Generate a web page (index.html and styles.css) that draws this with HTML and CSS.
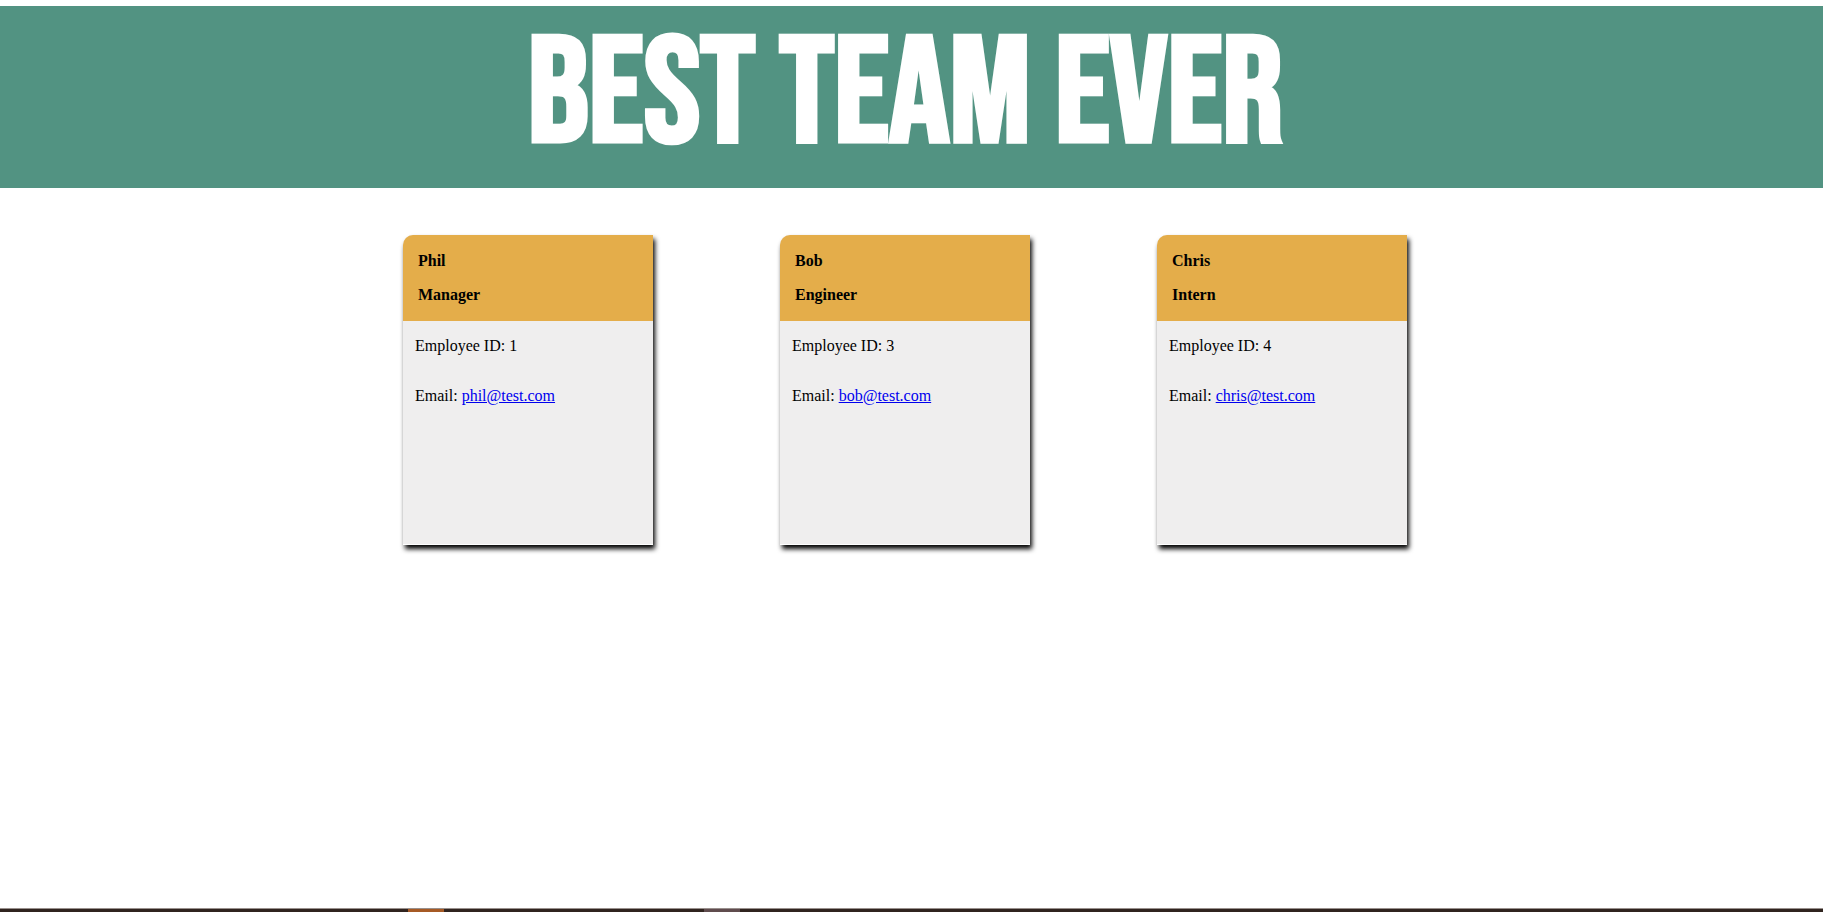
FILE: index.html
```html
<!DOCTYPE html>
<html lang="en">
<head>
<meta charset="utf-8">
<title>Best Team Ever</title>
<link rel="stylesheet" href="styles.css">
</head>
<body>
<header class="banner"><h1 class="title">BEST TEAM EVER</h1></header>
<main class="team">
  <article class="card">
    <div class="card-head"><h2 class="card-line">Phil</h2><h3 class="card-line">Manager</h3></div>
    <div class="card-body"><p class="detail">Employee ID: 1</p><p class="detail">Email: <a href="mailto:phil@test.com">phil@test.com</a></p></div>
  </article>
  <article class="card">
    <div class="card-head"><h2 class="card-line">Bob</h2><h3 class="card-line">Engineer</h3></div>
    <div class="card-body"><p class="detail">Employee ID: 3</p><p class="detail">Email: <a href="mailto:bob@test.com">bob@test.com</a></p></div>
  </article>
  <article class="card">
    <div class="card-head"><h2 class="card-line">Chris</h2><h3 class="card-line">Intern</h3></div>
    <div class="card-body"><p class="detail">Employee ID: 4</p><p class="detail">Email: <a href="mailto:chris@test.com">chris@test.com</a></p></div>
  </article>
</main>
<footer class="strip"><span class="strip-orange"></span><span class="strip-mauve"></span></footer>
</body>
</html>
```
FILE: styles.css
```css
* {
  box-sizing: border-box;
}

body {
  margin: 0;
  min-height: 100vh;
  padding-top: 6px;
  display: flex;
  flex-direction: column;
  background: #fff;
  color: #000;
  font-family: "Liberation Serif", "Times New Roman", serif;
  font-size: 16px;
  line-height: 20px;
}

.banner {
  padding: 15px 12px 15px 0;
  background: #529382;
  text-align: center;
}

.title {
  margin: 0;
  color: #fff;
  font-family: "Bebas Neue", "Roboto Condensed", "Liberation Sans Narrow", "Liberation Sans", sans-serif;
  font-size: 151px;
  font-weight: 700;
  line-height: 152px;
  white-space: nowrap;
}

.team {
  flex: 1;
  display: flex;
  justify-content: center;
  align-items: flex-start;
  gap: 127px;
  padding: 47px 13px 47px 0;
}

.card {
  width: 250px;
  min-height: 310px;
  background: #efeeee;
  border-top-left-radius: 10px;
  border-bottom: 1px solid #fff;
  box-shadow: 2px 4px 5px #000;
}

.card-head {
  display: grid;
  gap: 14px;
  padding: 16px 15px;
  background: #e4ad4a;
  border-top-left-radius: 10px;
}

.card-line {
  margin: 0;
  font-size: 16px;
  font-weight: 700;
}

.card-body {
  display: grid;
  gap: 30px;
  padding: 15px 12px;
}

.detail {
  margin: 0;
}

.detail a {
  color: #00e;
}

.strip {
  display: flex;
  height: 4px;
  padding-left: 408px;
  gap: 260px;
  background: #30241f;
  border-top: 1px solid #99908d;
}

.strip-orange {
  width: 36px;
  background: #a65a25;
}

.strip-mauve {
  width: 36px;
  background: #604c4e;
}
```
